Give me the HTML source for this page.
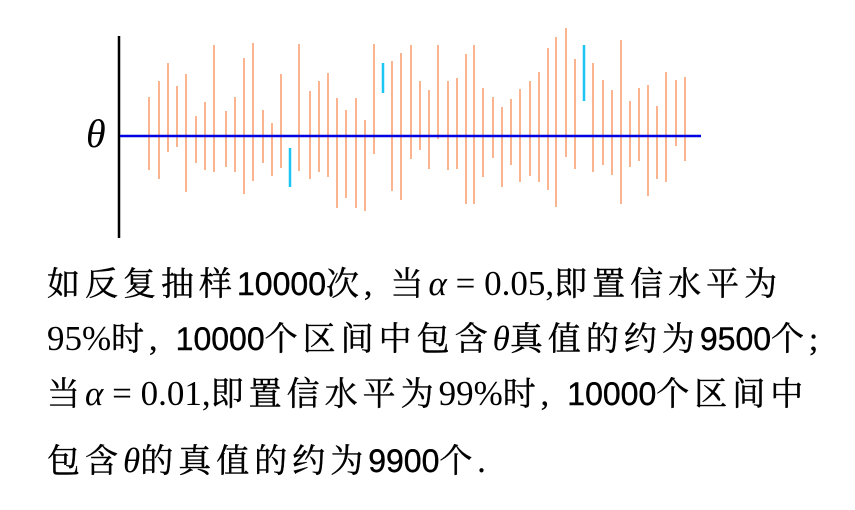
<!DOCTYPE html><html><head><meta charset="utf-8"><style>
body{margin:0;width:855px;height:510px;background:#fff;overflow:hidden;position:relative}
.t{position:absolute;left:47px;font:33px "Liberation Serif","Noto Serif CJK SC",serif;color:#000;white-space:nowrap;line-height:36px;letter-spacing:5px;-webkit-text-stroke:0.4px #000}
.n{font-family:"Liberation Sans",sans-serif;letter-spacing:0;font-size:32px}
.m{font-family:"Liberation Serif",serif;letter-spacing:0;font-size:35px;-webkit-text-stroke:0}
</style></head><body>
<svg width="855" height="250" style="position:absolute;left:0;top:0">
<line x1="119" y1="36" x2="119" y2="238" stroke="#000" stroke-width="2.5"/>
<text x="86" y="147" font-family="Liberation Serif" font-style="italic" font-size="40">θ</text>
<g stroke="#f9a273" stroke-width="1.6">
<line x1="149" y1="97" x2="149" y2="170"/><line x1="159" y1="81" x2="159" y2="179"/><line x1="168" y1="63" x2="168" y2="152"/><line x1="177" y1="86" x2="177" y2="147"/><line x1="186" y1="74" x2="186" y2="192"/><line x1="196" y1="116" x2="196" y2="163"/><line x1="205" y1="102" x2="205" y2="170"/><line x1="214" y1="45" x2="214" y2="172"/><line x1="226" y1="111" x2="226" y2="167"/><line x1="235" y1="97" x2="235" y2="172"/><line x1="244" y1="58" x2="244" y2="194"/><line x1="253" y1="43" x2="253" y2="181"/><line x1="263" y1="110" x2="263" y2="163"/><line x1="272" y1="123" x2="272" y2="176"/><line x1="281" y1="74" x2="281" y2="168"/><line x1="299" y1="44" x2="299" y2="171"/><line x1="310" y1="91" x2="310" y2="179"/><line x1="319" y1="81" x2="319" y2="172"/><line x1="328" y1="73" x2="328" y2="177"/><line x1="337" y1="98" x2="337" y2="208"/><line x1="346" y1="110" x2="346" y2="198"/><line x1="356" y1="98" x2="356" y2="208"/><line x1="365" y1="120" x2="365" y2="211"/><line x1="374" y1="44" x2="374" y2="154"/><line x1="392" y1="61" x2="392" y2="191"/>
<line x1="401" y1="53" x2="401" y2="200"/><line x1="411" y1="45" x2="411" y2="159"/><line x1="420" y1="81" x2="420" y2="150"/><line x1="429" y1="90" x2="429" y2="169"/><line x1="438" y1="45" x2="438" y2="139"/><line x1="448" y1="81" x2="448" y2="170"/><line x1="457" y1="78" x2="457" y2="169"/><line x1="466" y1="54" x2="466" y2="204"/><line x1="474" y1="45" x2="474" y2="204"/><line x1="483" y1="88" x2="483" y2="177"/><line x1="493" y1="97" x2="493" y2="158"/><line x1="502" y1="107" x2="502" y2="187"/><line x1="511" y1="99" x2="511" y2="165"/><line x1="520" y1="89" x2="520" y2="182"/><line x1="530" y1="81" x2="530" y2="176"/><line x1="539" y1="72" x2="539" y2="182"/><line x1="548" y1="48" x2="548" y2="190"/><line x1="556" y1="37" x2="556" y2="207"/><line x1="566" y1="28" x2="566" y2="157"/><line x1="575" y1="59" x2="575" y2="169"/><line x1="593" y1="63" x2="593" y2="172"/><line x1="603" y1="80" x2="603" y2="165"/><line x1="612" y1="90" x2="612" y2="175"/><line x1="621" y1="40" x2="621" y2="204"/><line x1="630" y1="101" x2="630" y2="167"/><line x1="639" y1="88" x2="639" y2="161"/><line x1="648" y1="85" x2="648" y2="196"/><line x1="657" y1="106" x2="657" y2="179"/><line x1="666" y1="72" x2="666" y2="182"/><line x1="676" y1="80" x2="676" y2="146"/><line x1="685" y1="77" x2="685" y2="161"/>
</g>
<g stroke="#1cc6f2" stroke-width="2.5">
<line x1="290" y1="148" x2="290" y2="187"/><line x1="383" y1="63" x2="383" y2="93"/><line x1="584" y1="45" x2="584" y2="101"/>
</g>
<line x1="120" y1="136" x2="701" y2="136" stroke="#0000e0" stroke-width="2.5"/>
</svg>
<div class="t" style="top:266px">如反复抽样<span class="n">10000</span>次, 当<span class="m"><i>α</i> = 0.05,</span>即置信水平为</div>
<div class="t" style="top:321px"><span class="m">95%</span>时, <span class="n">10000</span>个区间中包含<span class="m"><i>θ</i></span>真值的约为<span class="n">9500</span>个;</div>
<div class="t" style="top:376px">当<span class="m"><i>α</i> = 0.01,</span>即置信水平为<span class="m">99%</span>时, <span class="n">10000</span>个区间中</div>
<div class="t" style="top:443px">包含<span class="m"><i>θ</i></span>的真值的约为<span class="n">9900</span>个.</div>
</body></html>
